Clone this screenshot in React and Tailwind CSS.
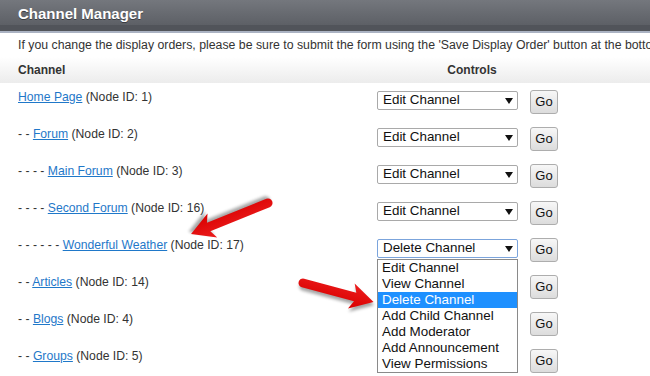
import React from "react";

const rows = [
  { dashes: "", name: "Home Page", id: 1 },
  { dashes: "- - ", name: "Forum", id: 2 },
  { dashes: "- - - - ", name: "Main Forum", id: 3 },
  { dashes: "- - - - ", name: "Second Forum", id: 16 },
  { dashes: "- - - - - - ", name: "Wonderful Weather", id: 17, open: true },
  { dashes: "- - ", name: "Articles", id: 14 },
  { dashes: "- - ", name: "Blogs", id: 4 },
  { dashes: "- - ", name: "Groups", id: 5 },
];

const options = [
  "Edit Channel",
  "View Channel",
  "Delete Channel",
  "Add Child Channel",
  "Add Moderator",
  "Add Announcement",
  "View Permissions",
];

function Caret() {
  return (
    <svg width="8" height="6" viewBox="0 0 8 6" className="shrink-0">
      <path d="M0 0 L8 0 L4 6 Z" fill="#111" />
    </svg>
  );
}

function Arrow({ x, y, len, angle }) {
  const L = len;
  const d = `M0 -4.5 L${L - 19} -4.5 L${L - 23} -13 L${L} 0 L${L - 23} 13 L${L - 19} 4.5 L0 4.5 A4.5 4.5 0 0 1 0 -4.5 Z`;
  return (
    <g transform={`translate(${x} ${y}) rotate(${angle})`}>
      <path d={d} fill="#000" opacity="0.35" transform="translate(1.5 3)" filter="url(#blur)" />
      <path d={d} fill="url(#redgrad)" />
    </g>
  );
}

export default function App() {
  return (
    <div
      className="relative w-[650px] h-[376px] overflow-hidden bg-white text-[#333]"
      style={{ fontFamily: '"Liberation Sans", Arial, sans-serif' }}
    >
      {/* title bar */}
      <div className="flex flex-col">
        <div className="h-[25px] bg-gradient-to-b from-[#74777d] to-[#5d6066] flex items-center pl-[18px]">
          <span className="text-[15px] font-bold text-white [text-shadow:0_1px_0_#3a3c40] pt-[3px]">
            Channel Manager
          </span>
        </div>
        <div className="h-[6px] bg-[#51545a]" />
        <div className="h-[2px] bg-[#aab2c2]" />
      </div>

      {/* description */}
      <div className="h-[24px] flex items-center pl-[18px] whitespace-nowrap text-[12.3px] text-[#333]">
        If you change the display orders, please be sure to submit the form using the 'Save Display Order' button at the bottom of the page.
      </div>

      {/* column header */}
      <div className="h-[26px] flex items-center bg-gradient-to-b from-[#ffffff] to-[#ececec] text-[12px] font-bold text-[#333]">
        <div className="w-[377px] pl-[18px]">Channel</div>
        <div className="w-[190px] text-center">Controls</div>
      </div>

      {/* rows */}
      <div className="flex flex-col">
        {rows.map((r) => (
          <div key={r.id} className="h-[37px] flex items-start">
            <div className="w-[377px] pl-[18px] pt-[7px] text-[12.2px] leading-[14px] text-[#333] whitespace-pre">
              {r.dashes}
              <a className="text-[#1f78c9] underline">{r.name}</a> (Node ID: {r.id})
            </div>
            <div className="relative mt-[8px]">
              <div
                className={`w-[141px] h-[19px] flex items-center justify-between pl-[5px] pr-[4px] bg-white rounded-[2px] border text-[13.4px] text-[#111] ${
                  r.open ? "border-[#7ba4dc]" : "border-[#a9a9a9]"
                }`}
              >
                <span>{r.open ? "Delete Channel" : "Edit Channel"}</span>
                <Caret />
              </div>
              {r.open && (
                <div className="absolute left-0 top-[20px] w-[141px] bg-white border border-[#8a8a8a] z-10 flex flex-col">
                  {options.map((o) => (
                    <div
                      key={o}
                      className={`h-[16px] flex items-center pl-[4px] text-[13.4px] leading-[16px] ${
                        o === "Delete Channel" ? "bg-[#1e90ff] text-white" : "text-[#111]"
                      }`}
                    >
                      {o}
                    </div>
                  ))}
                </div>
              )}
            </div>
            <button className="ml-[12px] mt-[7px] w-[28px] h-[24px] rounded-[3px] border border-[#adadad] bg-gradient-to-b from-[#f7f7f7] to-[#dcdcdc] text-[13px] text-[#111] flex items-center justify-center">
              Go
            </button>
          </div>
        ))}
      </div>

      {/* annotation arrows */}
      <svg
        className="absolute inset-0 pointer-events-none z-20"
        width="650"
        height="376"
        viewBox="0 0 650 376"
      >
        <defs>
          <linearGradient id="redgrad" x1="0" y1="-1" x2="0" y2="1" gradientUnits="objectBoundingBox">
            <stop offset="0" stopColor="#ff3a3a" />
            <stop offset="1" stopColor="#d90000" />
          </linearGradient>
          <filter id="blur" x="-20%" y="-50%" width="140%" height="200%">
            <feGaussianBlur stdDeviation="1.5" />
          </filter>
        </defs>
        <Arrow x={268} y={203} len={83} angle={158} />
        <Arrow x={303} y={283} len={73} angle={15} />
      </svg>
    </div>
  );
}
